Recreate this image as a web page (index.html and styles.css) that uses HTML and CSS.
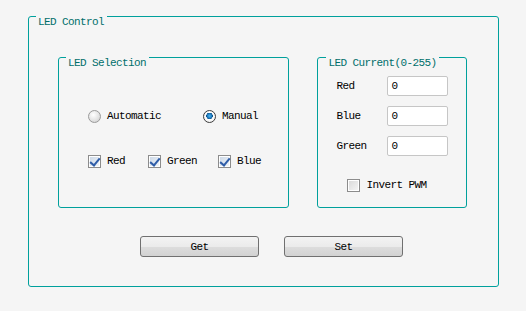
FILE: index.html
```html
<!DOCTYPE html>
<html lang="en">
<head>
  <meta charset="UTF-8">
  <title>LED Control</title>
  <link rel="stylesheet" href="styles.css">
</head>
<body>

  <fieldset class="group main">
    <legend>LED Control</legend>

    <div class="panels">
      <fieldset class="group selection">
        <legend>LED Selection</legend>

        <div class="mode-row">
          <label class="option mode-auto"><span class="radio"></span>Automatic</label>
          <label class="option"><span class="radio checked"></span>Manual</label>
        </div>

        <div class="color-row">
          <label class="option color-red"><span class="check checked"></span>Red</label>
          <label class="option color-green"><span class="check checked"></span>Green</label>
          <label class="option"><span class="check checked"></span>Blue</label>
        </div>
      </fieldset>

      <fieldset class="group current">
        <legend>LED Current(0-255)</legend>

        <div class="field">
          <span class="field-label">Red</span>
          <input class="field-input" type="text" value="0">
        </div>
        <div class="field">
          <span class="field-label">Blue</span>
          <input class="field-input" type="text" value="0">
        </div>
        <div class="field">
          <span class="field-label">Green</span>
          <input class="field-input" type="text" value="0">
        </div>

        <label class="option invert"><span class="check"></span>Invert PWM</label>
      </fieldset>
    </div>

    <div class="actions">
      <button class="btn">Get</button>
      <button class="btn">Set</button>
    </div>
  </fieldset>

</body>
</html>
```

FILE: styles.css
```css
:root {
  --teal: #00a09c;
  --teal-text: #006f6b;
  --bg: #f5f5f5;
}

* {
  box-sizing: border-box;
}

body {
  margin: 0;
  padding: 4px 0 0 28px;
  background-color: var(--bg);
  font-family: "Liberation Mono", "DejaVu Sans Mono", monospace;
  font-size: 11px;
  letter-spacing: -0.6px;
  color: #000;
}

/* group boxes */
.group {
  margin: 0;
  padding: 0;
  min-width: 0;
  border: 1px solid var(--teal);
  border-radius: 3px;
}

.group > legend {
  padding: 12px 3px 0 2px;
  line-height: 12px;
  color: var(--teal-text);
}

.main {
  width: 471px;
  padding: 17px 31px 29px 29px;
}

.main > legend {
  margin-left: -22px;
}

.panels {
  display: flex;
  gap: 28px;
  align-items: stretch;
}

.selection {
  width: 232px;
  padding: 41px 0 0 29px;
}

.selection > legend {
  margin-left: -22px;
}

.current {
  width: 150px;
  padding: 7px 0 15px 18px;
}

.current > legend {
  margin-left: -10px;
}

/* radio + checkbox rows */
.mode-row,
.color-row {
  display: flex;
  align-items: center;
  height: 13px;
}

.color-row {
  margin-top: 32px;
}

.option {
  display: flex;
  align-items: center;
  gap: 6px;
  line-height: 13px;
}

.mode-auto {
  width: 115px;
}

.color-red {
  width: 60px;
}

.color-green {
  width: 70px;
}

.radio {
  width: 13px;
  height: 13px;
  border-radius: 50%;
  border: 1px solid #9a9a9a;
  background: radial-gradient(circle at 40% 35%, #ffffff 0%, #e4e4e4 55%, #c8c8c8 100%);
  flex: none;
}

.radio.checked {
  border-color: #3c3c3c;
  background: radial-gradient(circle at 50% 45%, #4fb6f0 0%, #1a74b8 30%, #0c4f86 38%, #ffffff 42%, #e6e6e6 100%);
}

.check {
  position: relative;
  width: 13px;
  height: 13px;
  border: 1px solid #8c8c8c;
  background: linear-gradient(135deg, #d8d8d8 0%, #f6f6f6 100%);
  box-shadow: inset 0 0 0 1px #fff;
  flex: none;
}

.check.checked {
  background: linear-gradient(135deg, #c9d6e6 0%, #f4f7fb 100%);
}

.check.checked::after {
  content: "";
  position: absolute;
  left: 3px;
  top: 0;
  width: 4px;
  height: 8px;
  border: solid #2f5da8;
  border-width: 0 2px 2px 0;
  transform: rotate(40deg);
}

/* current fields */
.field {
  display: flex;
  align-items: center;
  height: 20px;
  margin-bottom: 10px;
}

.field-label {
  width: 51px;
}

.field-input {
  width: 61px;
  height: 20px;
  border: 1px solid #c6c6c6;
  border-radius: 2px;
  background: #fff;
  padding: 0 0 0 3px;
  font-family: inherit;
  font-size: 11px;
  letter-spacing: -0.6px;
  color: #000;
  outline: none;
}

.invert {
  margin: 23px 0 0 11px;
}

/* buttons */
.actions {
  display: flex;
  gap: 25px;
  margin: 28px 0 0 82px;
}

.btn {
  width: 119px;
  height: 21px;
  border: 1px solid #707070;
  border-radius: 3px;
  background: linear-gradient(to bottom, #f3f3f3 0%, #ebebeb 50%, #dddddd 51%, #d2d2d2 100%);
  font-family: inherit;
  font-size: 11px;
  letter-spacing: -0.6px;
  color: #000;
  padding: 0;
}
```
